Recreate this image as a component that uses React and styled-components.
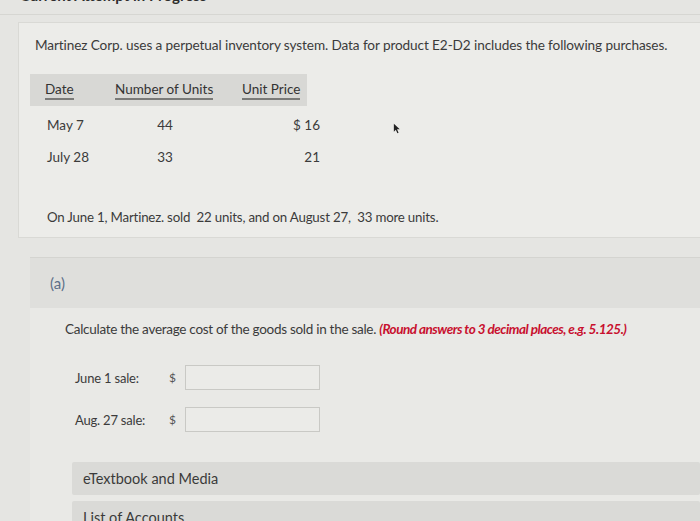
import styled, { createGlobalStyle } from 'styled-components';

const GlobalStyle = createGlobalStyle`
    html, body {
        margin: 0;
        padding: 0;
        background: #e6e6e3;
        font-family: Lato, "Open Sans", sans-serif;
        color: #3b3b3b;
        overflow: hidden;
    }
`

const rows = [
    { date: 'May 7', units: '44', price: '$ 16' },
    { date: 'July 28', units: '33', price: '21' },
];

function App() {
    return (
        <Page>
            <GlobalStyle />
            <TopBar>
                <TopTitle>Current Attempt in Progress</TopTitle>
            </TopBar>
            <Card>
                <Intro>
                    Martinez Corp. uses a perpetual inventory system. Data for product E2-D2 includes the following purchases.
                </Intro>
                <Table>
                    <HeadRow>
                        <HeadCell>Date</HeadCell>
                        <HeadCell>Number of Units</HeadCell>
                        <HeadCell>Unit Price</HeadCell>
                    </HeadRow>
                    <TableBody>
                        {rows.map((r) => (
                            <BodyRow key={r.date}>
                                <DateCell>{r.date}</DateCell>
                                <UnitsCell>{r.units}</UnitsCell>
                                <PriceCell>{r.price}</PriceCell>
                            </BodyRow>
                        ))}
                    </TableBody>
                </Table>
                <Note>On June 1, Martinez. sold&nbsp; 22 units, and on August 27,&nbsp; 33 more units.</Note>
                <Cursor viewBox="0 0 10 14">
                    <path d="M1 1 L1 11 L3.5 8.5 L5.5 13 L7 12.3 L5 8 L8.5 8 Z" fill="#222" />
                </Cursor>
            </Card>
            <Part>
                <PartHead>
                    <PartLabel>(a)</PartLabel>
                </PartHead>
                <PartBody>
                    <Question>
                        Calculate the average cost of the goods sold in the sale.{' '}
                        <Hint>(Round answers to 3 decimal places, e.g. 5.125.)</Hint>
                    </Question>
                    <Answers>
                        <AnswerRow>
                            <AnswerLabel>June 1 sale:</AnswerLabel>
                            <Dollar>$</Dollar>
                            <AnswerInput />
                        </AnswerRow>
                        <AnswerRow>
                            <AnswerLabel>Aug. 27 sale:</AnswerLabel>
                            <Dollar>$</Dollar>
                            <AnswerInput />
                        </AnswerRow>
                    </Answers>
                    <Resource>eTextbook and Media</Resource>
                    <Resource>List of Accounts</Resource>
                </PartBody>
            </Part>
        </Page>
    );
}

export default App;

const Page = styled.div`
    width: 700px;
    height: 521px;
    overflow: hidden;
    background: #e5e5e2;
`

const TopBar = styled.div`
    height: 14px;
    overflow: hidden;
    padding-left: 20px;
    border-bottom: 1px solid #d6d6d2;
`

const TopTitle = styled.div`
    margin-top: -15px;
    font-size: 15px;
    line-height: 20px;
    font-weight: 700;
    color: #2e2e2e;
`

const Card = styled.div`
    position: relative;
    margin: 7px 0 0 18px;
    padding: 13px 0 12px 16px;
    background: #ecece9;
    border: 1px solid #d9d9d5;
    border-right: none;
`

const Intro = styled.div`
    font-size: 13.6px;
    line-height: 18px;
    letter-spacing: -0.1px;
`

const Table = styled.div`
    margin: 20px 0 0 -5px;
    width: 277px;
`

const HeadRow = styled.div`
    display: grid;
    grid-template-columns: 70px 127px 80px;
    align-items: center;
    height: 32px;
    padding-left: 15px;
    box-sizing: border-box;
    background: #d8d8d5;
`

const HeadCell = styled.div`
    justify-self: start;
    font-size: 13.5px;
    line-height: 16px;
    padding-bottom: 1px;
    border-bottom: 2px solid #7a7a78;
    color: #333;
`

const TableBody = styled.div`
    padding-top: 3px;
`

const BodyRow = styled.div`
    display: grid;
    grid-template-columns: 70px 124px 79px;
    align-items: center;
    height: 32px;
    padding-left: 17px;
    font-size: 13.5px;
`

const DateCell = styled.div``

const UnitsCell = styled.div`
    text-align: center;
    padding-right: 28px;
`

const PriceCell = styled.div`
    text-align: right;
`

const Note = styled.div`
    margin: 36px 0 0 12px;
    font-size: 13.3px;
    letter-spacing: -0.2px;
`

const Cursor = styled.svg`
    position: absolute;
    left: 374px;
    top: 100px;
    width: 8px;
    height: 11px;
`

const Part = styled.div`
    margin: 19px 0 0 30px;
`

const PartHead = styled.div`
    height: 50px;
    display: flex;
    align-items: center;
    padding-left: 20px;
    background: #dfdfdc;
    border-top: 1px solid #d4d4d0;
`

const PartLabel = styled.span`
    font-size: 15px;
    color: #5c6f88;
`

const PartBody = styled.div`
    padding: 13px 0 0 35px;
    background: #e9e9e6;
`

const Question = styled.div`
    font-size: 13.5px;
    letter-spacing: -0.28px;
`

const Hint = styled.span`
    color: #c8102e;
    font-weight: 700;
    font-style: italic;
    letter-spacing: -0.5px;
`

const Answers = styled.div`
    display: flex;
    flex-direction: column;
    gap: 17px;
    margin: 28px 0 0 10px;
`

const AnswerRow = styled.div`
    display: flex;
    align-items: center;
`

const AnswerLabel = styled.span`
    width: 97px;
    font-size: 13px;
    letter-spacing: -0.2px;
`

const Dollar = styled.span`
    width: 13px;
    margin-left: -3px;
    padding-right: 3px;
    font-size: 12px;
    color: #555;
`

const AnswerInput = styled.div`
    width: 135px;
    height: 25px;
    box-sizing: border-box;
    border: 1px solid #c9c9c5;
    background: #ebebe8;
`

const Resource = styled.div`
    margin: 30px 0 0 7px;
    height: 33px;
    display: flex;
    align-items: center;
    padding-left: 11px;
    font-size: 14.5px;
    color: #3a3a3a;
    background: #dadad7;
    border-radius: 2px;
    & + & {
        margin-top: 6px;
    }
`
